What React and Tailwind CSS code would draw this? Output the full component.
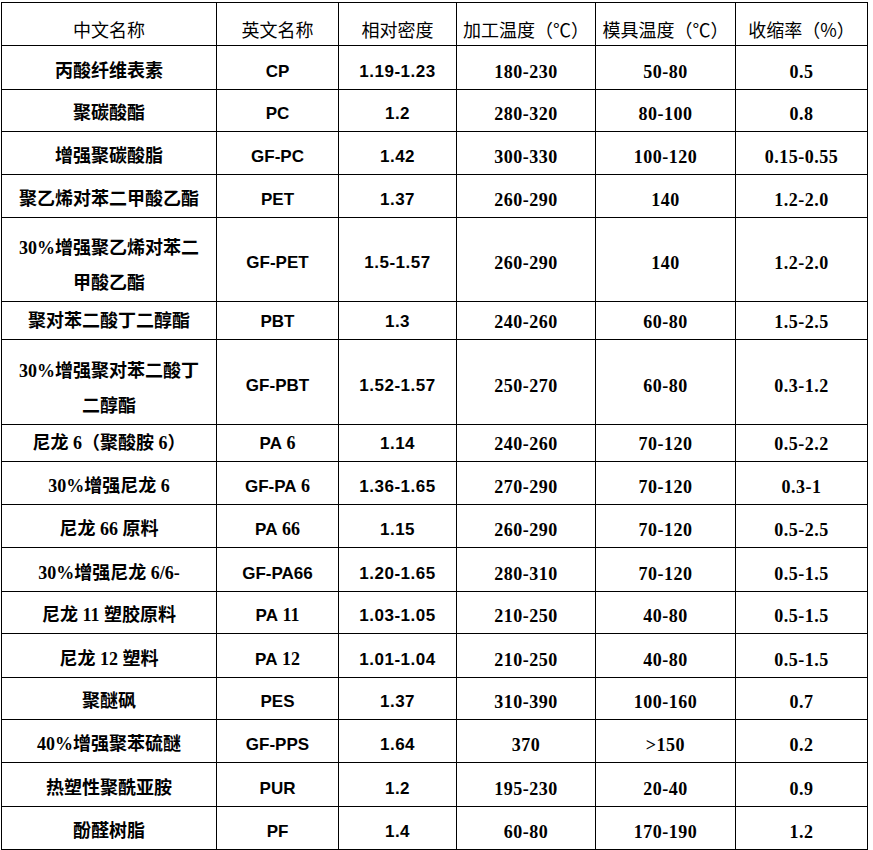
import React from "react";

const rows = [
  { h: "h-[42px]", cn: ["丙酸纤维表素"], en: "CP", d: "1.19-1.23", t: "180-230", m: "50-80", s: "0.5" },
  { h: "h-[43px]", cn: ["聚碳酸酯"], en: "PC", d: "1.2", t: "280-320", m: "80-100", s: "0.8" },
  { h: "h-[43px]", cn: ["增强聚碳酸脂"], en: "GF-PC", d: "1.42", t: "300-330", m: "100-120", s: "0.15-0.55" },
  { h: "h-[43px]", cn: ["聚乙烯对苯二甲酸乙酯"], en: "PET", d: "1.37", t: "260-290", m: "140", s: "1.2-2.0" },
  { h: "h-[79px]", cn: ["30%增强聚乙烯对苯二", "甲酸乙酯"], en: "GF-PET", d: "1.5-1.57", t: "260-290", m: "140", s: "1.2-2.0" },
  { h: "h-[44px]", cn: ["聚对苯二酸丁二醇酯"], en: "PBT", d: "1.3", t: "240-260", m: "60-80", s: "1.5-2.5" },
  { h: "h-[78px]", cn: ["30%增强聚对苯二酸丁", "二醇酯"], en: "GF-PBT", d: "1.52-1.57", t: "250-270", m: "60-80", s: "0.3-1.2" },
  { h: "h-[43px]", cn: ["尼龙 6（聚酸胺 6）"], en: "PA 6", d: "1.14", t: "240-260", m: "70-120", s: "0.5-2.2" },
  { h: "h-[43px]", cn: ["30%增强尼龙 6"], en: "GF-PA 6", d: "1.36-1.65", t: "270-290", m: "70-120", s: "0.3-1" },
  { h: "h-[44px]", cn: ["尼龙 66 原料"], en: "PA 66", d: "1.15", t: "260-290", m: "70-120", s: "0.5-2.5" },
  { h: "h-[42px]", cn: ["30%增强尼龙 6/6-"], en: "GF-PA66", d: "1.20-1.65", t: "280-310", m: "70-120", s: "0.5-1.5" },
  { h: "h-[44px]", cn: ["尼龙 11 塑胶原料"], en: "PA 11", d: "1.03-1.05", t: "210-250", m: "40-80", s: "0.5-1.5" },
  { h: "h-[42px]", cn: ["尼龙 12 塑料"], en: "PA 12", d: "1.01-1.04", t: "210-250", m: "40-80", s: "0.5-1.5" },
  { h: "h-[43px]", cn: ["聚醚砜"], en: "PES", d: "1.37", t: "310-390", m: "100-160", s: "0.7" },
  { h: "h-[44px]", cn: ["40%增强聚苯硫醚"], en: "GF-PPS", d: "1.64", t: "370", m: ">150", s: "0.2" },
  { h: "h-[43px]", cn: ["热塑性聚酰亚胺"], en: "PUR", d: "1.2", t: "195-230", m: "20-40", s: "0.9" },
  { h: "h-[43px]", cn: ["酚醛树脂"], en: "PF", d: "1.4", t: "60-80", m: "170-190", s: "1.2" },
  { h: "h-[43px]", cn: [""], en: "", d: "", t: "", m: "", s: "" },
];

const grid = "grid grid-cols-[215px_122px_118px_139px_140px_132px]";
const cellBase = "border-r border-b border-black flex flex-col items-center justify-center text-black";
const cell = `${cellBase} pt-[8px]`;
const cnFont = "font-['Liberation_Serif','Noto_Sans_CJK_SC',serif] font-bold text-[18px]";
const sansFont = "font-['Liberation_Sans','Noto_Sans_CJK_SC',sans-serif] font-bold text-[17px]";
const serifFont = "font-['Liberation_Serif','Noto_Sans_CJK_SC',serif] font-bold text-[18px] tracking-[0.5px]";
const headFont = "font-['Noto_Sans_CJK_SC',sans-serif] font-normal text-[18px]";

function EnCode({ text }) {
  const m = text.match(/^(.*?)( \d+)$/);
  if (m) {
    return (
      <span className="whitespace-pre">
        {m[1]}
        <span className="font-['Liberation_Serif',serif] text-[18px]">{m[2]}</span>
      </span>
    );
  }
  return <span className="whitespace-pre">{text}</span>;
}

export default function App() {
  const headers = ["中文名称", "英文名称", "相对密度", "加工温度（℃）", "模具温度（℃）", "收缩率（%）"];
  return (
    <div className="bg-white w-[873px] h-[850px] overflow-hidden">
      <div className="ml-[1px] mt-[2px] w-fit border-l border-t border-black">
        <div className={`${grid} h-[43px]`}>
          {headers.map((h, i) => (
            <div key={i} className={`${cellBase} pt-[10px] ${headFont} leading-[22px]`}>
              {h}
            </div>
          ))}
        </div>
        {rows.map((r, i) => (
          <div key={i} className={`${grid} ${r.h}`}>
            <div
              className={`${cellBase} ${r.cn.length > 1 ? "pt-[14px]" : "pt-[8px]"} ${cnFont} leading-[35px]`}
            >
              {r.cn.map((l, j) => (
                <div key={j} className="whitespace-pre">{l}</div>
              ))}
            </div>
            <div className={`${cell} ${sansFont} leading-[22px]`}>
              <EnCode text={r.en} />
            </div>
            <div className={`${cell} ${sansFont} tracking-[0.5px] leading-[22px]`}>{r.d}</div>
            <div className={`${cell} ${serifFont} leading-[22px]`}>{r.t}</div>
            <div className={`${cell} ${serifFont} leading-[22px]`}>{r.m}</div>
            <div className={`${cell} ${serifFont} leading-[22px]`}>{r.s}</div>
          </div>
        ))}
      </div>
    </div>
  );
}
